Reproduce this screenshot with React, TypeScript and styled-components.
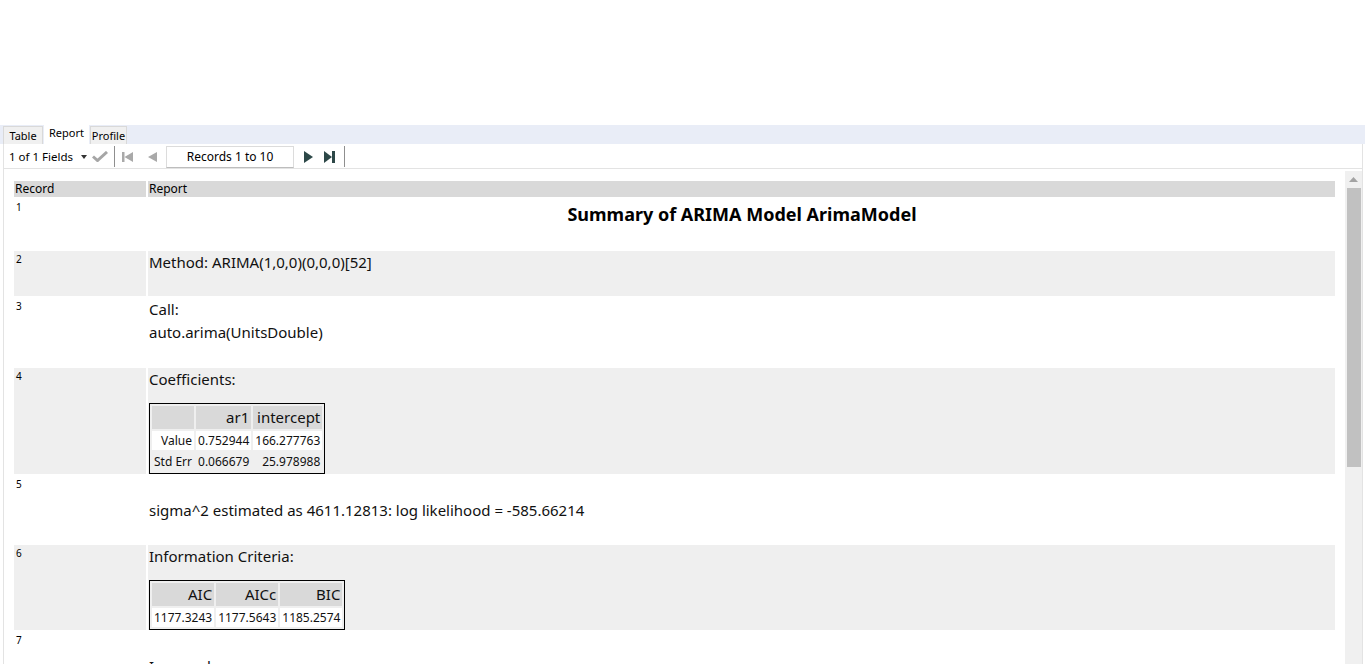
import React from "react";
import styled, { createGlobalStyle } from "styled-components";

const Global = createGlobalStyle`
  html, body { margin: 0; padding: 0; background: #ffffff; }
  body { font-family: "Noto Sans", "Open Sans", sans-serif; color: #000; overflow: hidden; }
  * { box-sizing: border-box; }
`;

const Page = styled.div`
  height: 664px;
  display: flex;
  flex-direction: column;
`;

const TopSpace = styled.div`
  height: 125px;
  flex: none;
`;

const TabBar = styled.div`
  height: 19px;
  flex: none;
  background: #e9edf7;
  display: flex;
  align-items: flex-end;
  padding-left: 3px;
`;

const Tab = styled.div<{ $active?: boolean; $w: number; $ml?: number }>`
  width: ${(p) => p.$w}px;
  margin-left: ${(p) => p.$ml ?? 0}px;
  height: ${(p) => (p.$active ? 21 : 18)}px;
  font-size: 11px;
  line-height: 17px;
  text-align: center;
  background: ${(p) => (p.$active ? "#ffffff" : "#f0f0f0")};
  border: 1px solid ${(p) => (p.$active ? "#ffffff" : "#d9d9d9")};
  border-bottom: none;
  color: #000;
  white-space: nowrap;
`;

const Panel = styled.div`
  flex: 1;
  min-height: 0;
  margin-left: 3px;
  width: 1360px;
  border-left: 1px solid #e3e3e3;
  border-right: 1px solid #e3e3e3;
  display: flex;
  flex-direction: column;
`;

const Toolbar = styled.div`
  height: 25px;
  flex: none;
  border-bottom: 1px solid #e3e3e3;
  display: flex;
  align-items: center;
  padding: 1px 0 0 5px;
  font-size: 11.5px;
`;

const FieldsLabel = styled.span`
  margin-right: 8px;
`;

const Caret = styled.span`
  width: 0;
  height: 0;
  border-left: 3.5px solid transparent;
  border-right: 3.5px solid transparent;
  border-top: 4px solid #333;
`;

const Sep = styled.span<{ $ml: number }>`
  width: 1px;
  height: 21px;
  background: #8f8f8f;
  margin-left: ${(p) => p.$ml}px;
  margin-right: 6px;
`;

const IconBtn = styled.span<{ $ml: number }>`
  display: inline-flex;
  margin-left: ${(p) => p.$ml}px;
  align-items: center;
`;

const RecordsBox = styled.div`
  width: 128px;
  height: 22px;
  margin-left: 9px;
  border: 1px solid #dcdcdc;
  border-bottom-color: #bdbdbd;
  background: #fff;
  font-size: 12px;
  display: flex;
  align-items: center;
  justify-content: center;
`;

const Body = styled.div`
  flex: 1;
  min-height: 0;
  display: flex;
`;

const Scroller = styled.div`
  flex: 1;
  min-width: 0;
  overflow: hidden;
  padding: 12px 10px 0 10px;
`;

const ScrollTrack = styled.div`
  width: 17px;
  flex: none;
  margin-top: 2px;
  background: #f0f0f0;
  display: flex;
  flex-direction: column;
  align-items: center;
`;

const ScrollArrow = styled.div`
  height: 17px;
  display: flex;
  align-items: center;
  justify-content: center;
`;

const ScrollThumb = styled.div`
  width: 14px;
  height: 279px;
  background: #c1c1c1;
`;

const Grid = styled.div`
  display: grid;
  grid-template-columns: 132px 1fr;
  gap: 2px;
`;

const HeadCell = styled.div`
  height: 16px;
  background: #d9d9d9;
  font-size: 12px;
  line-height: 16px;
  padding-left: 1px;
`;

const RecCell = styled.div<{ $alt?: boolean }>`
  background: ${(p) => (p.$alt ? "#efefef" : "#ffffff")};
  font-size: 10px;
  padding: 3px 2px 0;
  line-height: 11px;
`;

const RepCell = styled.div<{ $alt?: boolean }>`
  background: ${(p) => (p.$alt ? "#efefef" : "#ffffff")};
  font-size: 15px;
  line-height: 23px;
  padding: 0 0 0 1px;
  color: #111;
`;

const Line = styled.div<{ $h?: number }>`
  height: ${(p) => p.$h ?? 23}px;
  white-space: nowrap;
`;

const Title = styled.div`
  height: 50px;
  text-align: center;
  font-weight: 700;
  font-size: 18px;
  line-height: 20px;
  padding-top: 5px;
  color: #000;
`;

const Mini = styled.table`
  margin-top: 12px;
  border: 1px solid #000;
  border-spacing: 2px;
  font-size: 12px;
  color: #111;
`;

const MiniHead = styled.th`
  background: #d9d9d9;
  font-size: 15px;
  font-weight: 400;
  text-align: right;
  height: 23px;
  padding: 0 2px;
  line-height: 23px;
`;

const MiniCell = styled.td<{ $odd?: boolean }>`
  background: ${(p) => (p.$odd ? "#ffffff" : "transparent")};
  text-align: right;
  height: 19px;
  padding: 0 2px;
  line-height: 19px;
  white-space: nowrap;
`;

const Check = () => (
  <svg width="16" height="11" viewBox="0 0 16 11">
    <path d="M1 5.5 L5.5 9.5 L15 1" fill="none" stroke="#a6a6a6" strokeWidth="3" />
  </svg>
);

const Tri = ({ dir, color, h }: { dir: "l" | "r"; color: string; h: number }) => (
  <svg width="9" height={h} viewBox={`0 0 9 ${h}`}>
    {dir === "l" ? (
      <path d={`M9 0 L0 ${h / 2} L9 ${h} Z`} fill={color} />
    ) : (
      <path d={`M0 0 L9 ${h / 2} L0 ${h} Z`} fill={color} />
    )}
  </svg>
);

const Edge = ({ dir, color, h }: { dir: "l" | "r"; color: string; h: number }) => (
  <svg width="11" height={h} viewBox={`0 0 11 ${h}`}>
    {dir === "l" ? (
      <>
        <rect x="0" y="0" width="2.5" height={h} fill={color} />
        <path d={`M11 0 L2.5 ${h / 2} L11 ${h} Z`} fill={color} />
      </>
    ) : (
      <>
        <path d={`M0 0 L8 ${h / 2} L0 ${h} Z`} fill={color} />
        <rect x="8" y="0" width="3" height={h} fill={color} />
      </>
    )}
  </svg>
);

type Row = { n: number; content: React.ReactNode };

const coef = (
  <>
    <Line>Coefficients:</Line>
    <Mini>
      <tbody>
        <tr>
          <MiniHead></MiniHead>
          <MiniHead>ar1</MiniHead>
          <MiniHead>intercept</MiniHead>
        </tr>
        <tr>
          <MiniCell $odd>Value</MiniCell>
          <MiniCell $odd>0.752944</MiniCell>
          <MiniCell $odd>166.277763</MiniCell>
        </tr>
        <tr>
          <MiniCell>Std Err</MiniCell>
          <MiniCell>0.066679</MiniCell>
          <MiniCell>25.978988</MiniCell>
        </tr>
      </tbody>
    </Mini>
  </>
);

const ic = (
  <>
    <Line>Information Criteria:</Line>
    <Mini>
      <tbody>
        <tr>
          <MiniHead>AIC</MiniHead>
          <MiniHead>AICc</MiniHead>
          <MiniHead>BIC</MiniHead>
        </tr>
        <tr>
          <MiniCell $odd>1177.3243</MiniCell>
          <MiniCell $odd>1177.5643</MiniCell>
          <MiniCell $odd>1185.2574</MiniCell>
        </tr>
      </tbody>
    </Mini>
  </>
);

const rows: Row[] = [
  { n: 1, content: <Title>Summary of ARIMA Model ArimaModel</Title> },
  { n: 2, content: (<><Line>Method: ARIMA(1,0,0)(0,0,0)[52]</Line><Line $h={22} /></>) },
  { n: 3, content: (<><Line>Call:</Line><Line>auto.arima(UnitsDouble)</Line><Line $h={22} /></>) },
  { n: 4, content: coef },
  { n: 5, content: (<><Line /><Line>sigma^2 estimated as 4611.12813: log likelihood = -585.66214</Line><Line $h={21} /></>) },
  { n: 6, content: ic },
  { n: 7, content: (<><Line /><Line>In-sample error measures:</Line><Line /></>) },
];

export default function App() {
  return (
    <>
      <Global />
      <Page>
        <TopSpace />
        <TabBar>
          <Tab $w={40}>Table</Tab>
          <Tab $active $w={45} $ml={1}>Report</Tab>
          <Tab $w={37} $ml={1}>Profile</Tab>
        </TabBar>
        <Panel>
          <Toolbar>
            <FieldsLabel>1 of 1 Fields</FieldsLabel>
            <Caret />
            <IconBtn $ml={5}><Check /></IconBtn>
            <Sep $ml={6} />
            <IconBtn $ml={1}><Edge dir="l" color="#a9a9a9" h={10} /></IconBtn>
            <IconBtn $ml={15}><Tri dir="l" color="#a9a9a9" h={10} /></IconBtn>
            <RecordsBox>Records 1 to 10</RecordsBox>
            <IconBtn $ml={10}><Tri dir="r" color="#2d4848" h={12} /></IconBtn>
            <IconBtn $ml={11}><Edge dir="r" color="#2d4848" h={12} /></IconBtn>
            <Sep $ml={9} />
          </Toolbar>
          <Body>
            <Scroller>
              <Grid>
                <HeadCell>Record</HeadCell>
                <HeadCell>Report</HeadCell>
                {rows.map((r) => (
                  <React.Fragment key={r.n}>
                    <RecCell $alt={r.n % 2 === 0}>{r.n}</RecCell>
                    <RepCell $alt={r.n % 2 === 0}>{r.content}</RepCell>
                  </React.Fragment>
                ))}
              </Grid>
            </Scroller>
            <ScrollTrack>
              <ScrollArrow>
                <svg width="9" height="5" viewBox="0 0 9 5">
                  <path d="M0 5 L4.5 0 L9 5 Z" fill="#a3a3a3" />
                </svg>
              </ScrollArrow>
              <ScrollThumb />
            </ScrollTrack>
          </Body>
        </Panel>
      </Page>
    </>
  );
}
